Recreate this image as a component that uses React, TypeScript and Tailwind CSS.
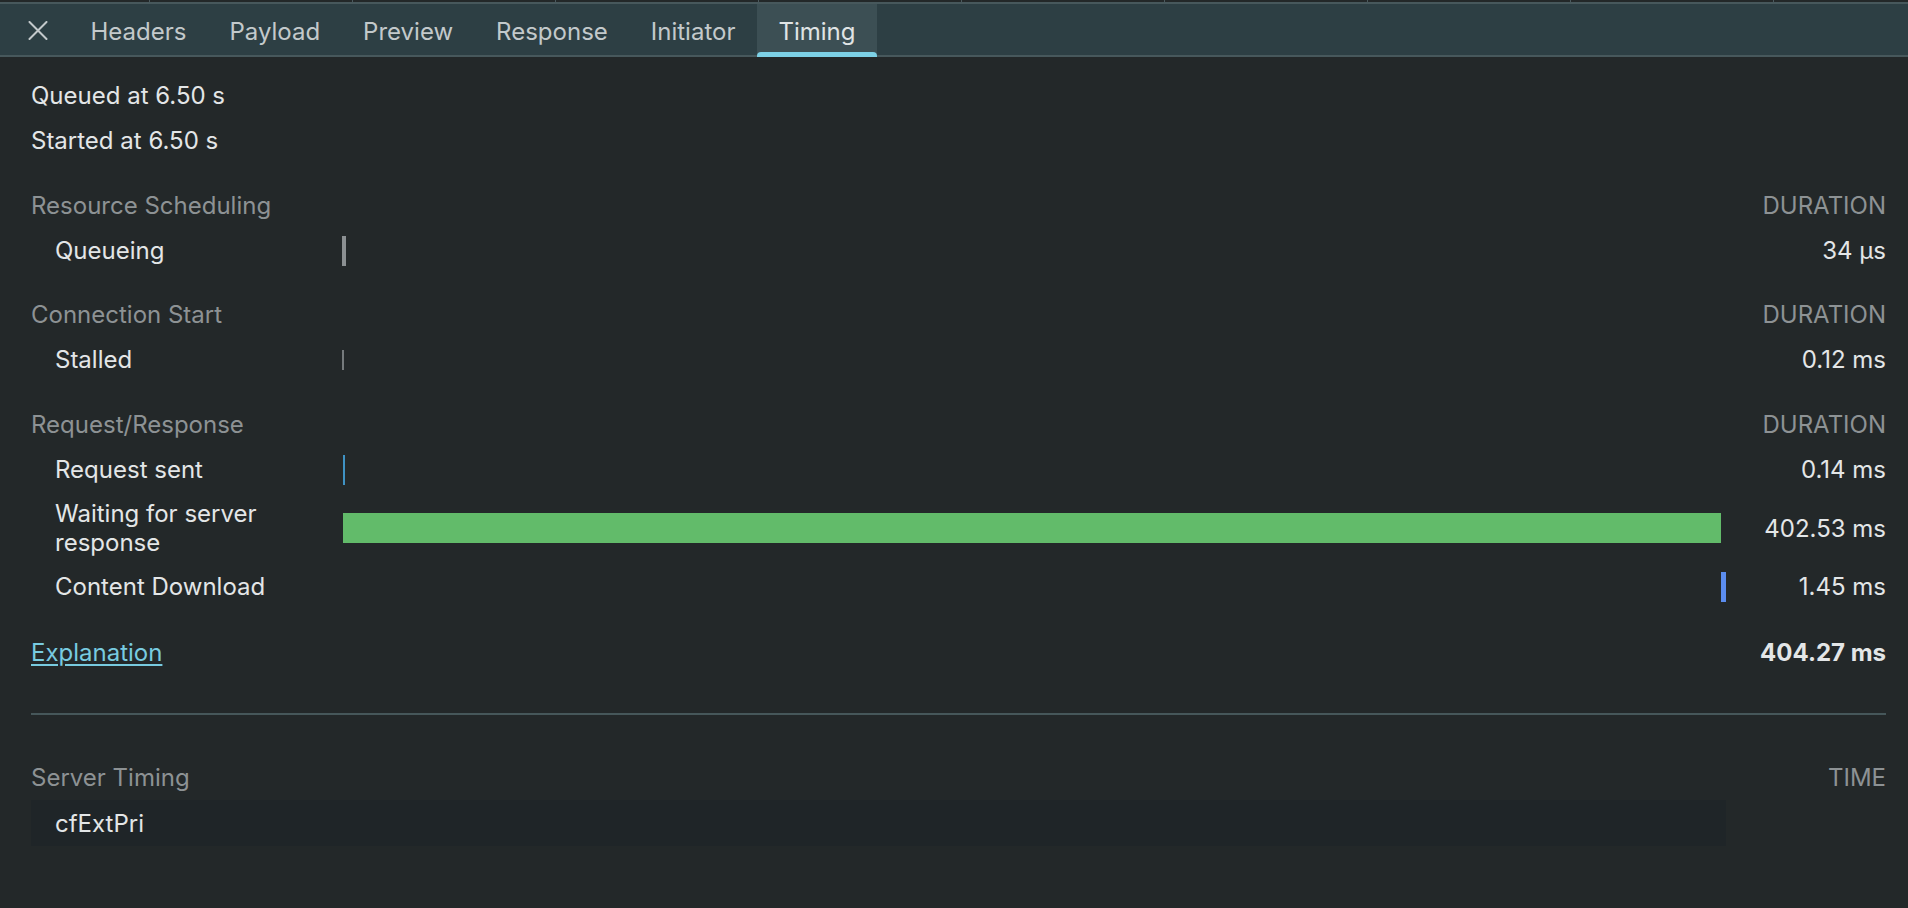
import { Fragment } from "react";

const tabs = ["Headers", "Payload", "Preview", "Response", "Initiator", "Timing"];

function CloseIcon() {
  return (
    <svg width="20" height="19" viewBox="0 0 20 19" fill="none">
      <path d="M1.5 1 L18.5 18 M18.5 1 L1.5 18" stroke="#c3c9cb" strokeWidth="2" strokeLinecap="round" />
    </svg>
  );
}

function SectionHeader({ title, right }: { title: string; right: string }) {
  return (
    <div className="flex h-[45px] items-center text-[#8d9294]">
      <div className="flex-1">{title}</div>
      <div className="w-[160px] text-right">{right}</div>
    </div>
  );
}

function Row({
  label,
  value,
  tall,
  children,
}: {
  label: string;
  value: string;
  tall?: boolean;
  children?: React.ReactNode;
}) {
  return (
    <div className={`flex items-center ${tall ? "h-[72px]" : "h-[45px]"}`}>
      <div className="w-[312px] shrink-0 pl-[24px] pr-[40px] leading-[29px]">{label}</div>
      <div className="flex h-full flex-1 items-center">{children}</div>
      <div className="w-[160px] shrink-0 text-right">{value}</div>
    </div>
  );
}

export default function App() {
  return (
    <div className="h-[908px] w-full overflow-hidden bg-[#232829] font-['Inter',sans-serif] text-[24px] leading-[29px] text-[#e3e6e7]">
      {/* waterfall grid strip */}
      <div className="flex h-[2px]">
        <div className="w-[149px] shrink-0" />
        {Array.from({ length: 9 }).map((_, i) => (
          <div key={i} className="w-[203px] shrink-0 border-l border-[#4b5a5e]" />
        ))}
      </div>

      {/* tab bar */}
      <div className="flex h-[55px] items-stretch border-y-2 border-[#47585c] bg-[#2d3f44]">
        <div className="flex w-[69px] shrink-0 items-center justify-center pl-[7px] pt-[2px]">
          <CloseIcon />
        </div>
        {tabs.map((t) => (
          <Fragment key={t}>
            {t === "Timing" ? (
              <div className="relative flex items-center bg-[#3c4f54] px-[21.5px] pt-[4px] text-[#e0e4e5]">
                {t}
                <div className="absolute bottom-[-2px] left-0 right-0 h-[5px] rounded-t-[4px] bg-[#7dd1e6]" />
              </div>
            ) : (
              <div className="flex items-center px-[21.5px] pt-[4px] text-[#c3c9cb]">{t}</div>
            )}
          </Fragment>
        ))}
      </div>

      <div className="pl-[31px] pr-[22px] pt-[16px]">
        <div className="flex h-[45px] items-center">Queued at 6.50 s</div>
        <div className="flex h-[45px] items-center">Started at 6.50 s</div>

        <div className="mt-[20px]">
          <SectionHeader title="Resource Scheduling" right="DURATION" />
          <Row label="Queueing" value="34 µs">
            <div className="h-[30px] w-[4px] -ml-[1px] bg-[#8b9092]" />
          </Row>
        </div>

        <div className="mt-[19px]">
          <SectionHeader title="Connection Start" right="DURATION" />
          <Row label="Stalled" value="0.12 ms">
            <div className="h-[20px] w-[2px] -ml-[1px] bg-[#757a7c]" />
          </Row>
        </div>

        <div className="mt-[20px]">
          <SectionHeader title="Request/Response" right="DURATION" />
          <Row label="Request sent" value="0.14 ms">
            <div className="h-[30px] w-[2px] bg-[#3f92c3]" />
          </Row>
          <Row label="Waiting for server response" value="402.53 ms" tall>
            <div className="h-[30px] w-[1378px] bg-[#62bb6a]" />
          </Row>
          <Row label="Content Download" value="1.45 ms">
            <div className="ml-[1378px] h-[30px] w-[5px] bg-[#5b8def]" />
          </Row>
        </div>

        <div className="mt-[21px] flex h-[45px] items-center">
          <a className="flex-1 text-[#78cbe0] underline underline-offset-[3px]">Explanation</a>
          <div className="w-[160px] text-right font-bold">404.27 ms</div>
        </div>

        <div className="mt-[38px] h-[2px] bg-[#46575a]" />

        <div className="mt-[40px]">
          <SectionHeader title="Server Timing" right="TIME" />
          <div className="flex h-[46px]">
            <div className="flex w-[1695px] items-center bg-[#1f2528] pl-[24px]">cfExtPri</div>
          </div>
        </div>
      </div>
    </div>
  );
}
